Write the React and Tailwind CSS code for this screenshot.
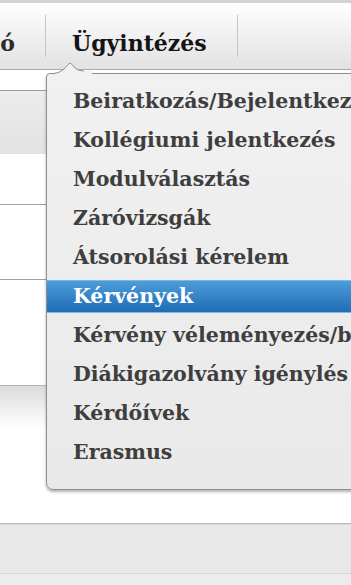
import React from 'react'

const items = [
  'Beiratkozás/Bejelentkezés',
  'Kollégiumi jelentkezés',
  'Modulválasztás',
  'Záróvizsgák',
  'Átsorolási kérelem',
  'Kérvények',
  'Kérvény véleményezés/bírálás',
  'Diákigazolvány igénylés',
  'Kérdőívek',
  'Erasmus',
]

const App = () => {
  return (
    <div className="relative w-[351px] h-[585px] overflow-hidden bg-white font-['DejaVu_Serif',Georgia,serif]">
      {/* top strip */}
      <div className="h-[3px] bg-[#d2d2d2]" />

      {/* Tab bar */}
      <div className="flex h-[67px] bg-gradient-to-b from-white to-[#e2e2e2] border-b border-[#a9a9a9] shadow-[0_2px_2px_rgba(0,0,0,0.18)]">
        <div className="w-[45px] shrink-0 overflow-hidden flex justify-end items-center pt-[14px] pr-[30px]">
          <span className="shrink-0 text-[22px] font-bold text-[#2a2a2a] whitespace-nowrap">Információ</span>
        </div>
        <div className="w-px self-stretch my-[12px] bg-[#c4c4c4]" />
        <div className="w-[191px] flex items-center pl-[26px] pt-[14px]">
          <span className="text-[22px] font-bold text-[#141414] whitespace-nowrap">Ügyintézés</span>
        </div>
        <div className="w-px self-stretch my-[12px] bg-[#c4c4c4]" />
        <div className="flex-1" />
      </div>

      {/* Background rows */}
      <div className="h-[20px] bg-white" />
      <div className="h-px bg-[#9d9d9d]" />
      <div className="h-[63px] bg-gradient-to-b from-[#ececec] to-[#e2e2e2]" />
      <div className="h-[50px] bg-white" />
      <div className="h-px bg-[#a0a0a0]" />
      <div className="h-[74px] bg-white" />
      <div className="h-px bg-[#a0a0a0]" />
      <div className="h-[105px] bg-white" />
      <div className="h-px bg-[#b5b5b5]" />
      <div className="h-[42px] bg-gradient-to-b from-[#dcdcdc] to-white" />
      <div className="h-[95px] bg-white" />
      <div className="h-px bg-[#b8b8b8]" />
      <div className="h-px bg-[#dadada]" />
      <div className="h-[48px] bg-[#e8e8e8]" />
      <div className="h-px bg-[#d6d6d6]" />
      <div className="h-[20px] bg-[#ececec]" />

      {/* Dropdown menu */}
      <div className="absolute left-[46px] top-[73px] w-[330px] h-[417px] bg-gradient-to-b from-[#f1f1f1] to-[#e9e9e9] border border-[#8f8f8f] rounded-tl-[4px] rounded-bl-[7px] shadow-[0_2px_3px_rgba(0,0,0,0.3)] pt-[8px]">
        <ul>
          {items.map((item, i) => (
            <li
              key={i}
              className={
                i === 5
                  ? 'h-[33px] my-[3px] flex items-center pl-[26px] bg-gradient-to-b from-[#4c9ddb] to-[#1e6cb3] border-y border-[#7fb6e3] text-white'
                  : 'h-[39px] flex items-center pl-[26px] text-[#3e3e3e]'
              }
            >
              <span className="text-[20.5px] font-bold whitespace-nowrap">{item}</span>
            </li>
          ))}
        </ul>
      </div>

      {/* notch */}
      <svg className="absolute left-[52px] top-[60px]" width="40" height="16" viewBox="0 0 40 16">
        <path d="M0 14 Q8 13 12 9 Q16 4 18 3 Q20 4 23 8 Q26 11 32 11 L40 11 L40 16 L0 16 Z" fill="#f1f1f1" />
        <path d="M0 14 Q8 13 12 9 Q16 4 18 3 Q20 4 23 8 Q26 11 32 11" fill="none" stroke="#8f8f8f" strokeWidth="1" />
      </svg>
    </div>
  )
}

export default App
